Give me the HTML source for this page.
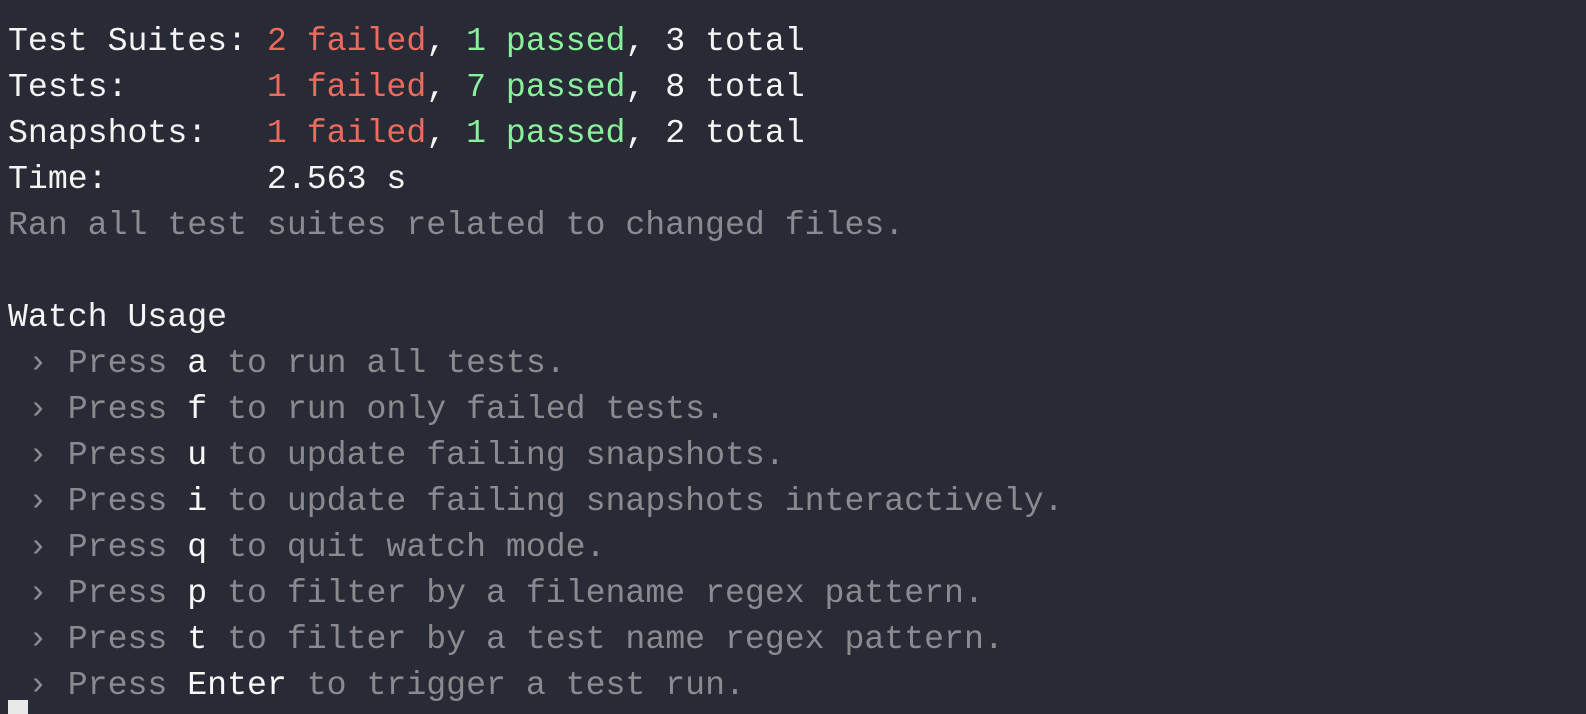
<!DOCTYPE html>
<html><head><style>
html,body{margin:0;padding:0;background:#282a35;width:1586px;height:714px;overflow:hidden}
.l{position:absolute;left:8px;white-space:pre;font-family:"Liberation Mono",monospace;font-size:33.2px;line-height:46px;color:#f4f4f4}
.r{color:#ec6a5e}.g{color:#8bf09c}.d{color:#8a8a90}.w{color:#f8f8f8}
.cur{position:absolute;left:8px;top:700px;width:20px;height:14px;background:#e8e8e8}
</style></head><body>
<div class="l" style="top:18px">Test Suites: <span class="r">2 failed</span>, <span class="g">1 passed</span>, 3 total</div>
<div class="l" style="top:64px">Tests:       <span class="r">1 failed</span>, <span class="g">7 passed</span>, 8 total</div>
<div class="l" style="top:110px">Snapshots:   <span class="r">1 failed</span>, <span class="g">1 passed</span>, 2 total</div>
<div class="l" style="top:156px">Time:        2.563 s</div>
<div class="l" style="top:202px"><span class="d">Ran all test suites related to changed files.</span></div>
<div class="l" style="top:294px">Watch Usage</div>
<div class="l" style="top:340px"><span class="d"> › Press </span><span class="w">a</span><span class="d"> to run all tests.</span></div>
<div class="l" style="top:386px"><span class="d"> › Press </span><span class="w">f</span><span class="d"> to run only failed tests.</span></div>
<div class="l" style="top:432px"><span class="d"> › Press </span><span class="w">u</span><span class="d"> to update failing snapshots.</span></div>
<div class="l" style="top:478px"><span class="d"> › Press </span><span class="w">i</span><span class="d"> to update failing snapshots interactively.</span></div>
<div class="l" style="top:524px"><span class="d"> › Press </span><span class="w">q</span><span class="d"> to quit watch mode.</span></div>
<div class="l" style="top:570px"><span class="d"> › Press </span><span class="w">p</span><span class="d"> to filter by a filename regex pattern.</span></div>
<div class="l" style="top:616px"><span class="d"> › Press </span><span class="w">t</span><span class="d"> to filter by a test name regex pattern.</span></div>
<div class="l" style="top:662px"><span class="d"> › Press </span><span class="w">Enter</span><span class="d"> to trigger a test run.</span></div>
<div class="cur"></div>
</body></html>
